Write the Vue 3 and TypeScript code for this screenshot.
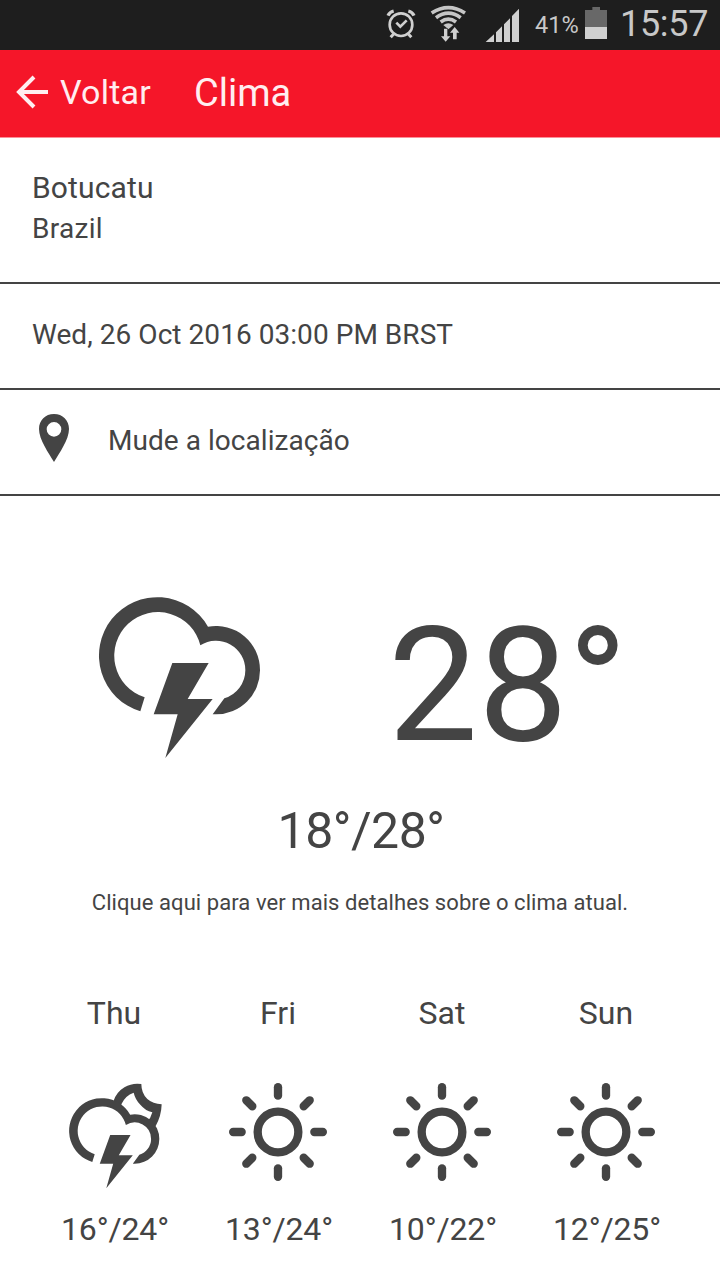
<script setup lang="ts">
interface Day { name: string; range: string; icon: 'storm' | 'sun' }

const days: Day[] = [
  { name: 'Thu', range: '16°/24°', icon: 'storm' },
  { name: 'Fri', range: '13°/24°', icon: 'sun' },
  { name: 'Sat', range: '10°/22°', icon: 'sun' },
  { name: 'Sun', range: '12°/25°', icon: 'sun' },
]
const rays = [0, 45, 90, 135, 180, 225, 270, 315]
const cloud =
  'M181 394A175 175 0 1 1 384 140A132 132 0 0 1 540 271A132 132 0 0 1 408 403H398L433 355A88 88 0 0 0 496 271A88 88 0 0 0 361 196A131 131 0 1 0 194 352Z'
const bolt = 'M277 249H386L323 357H398L256 534L293 403H221Z'
</script>

<template>
  <div class="screen">
    <div class="status">
      <svg class="indicators" viewBox="0 0 450 150">
        <g fill="none" stroke="#d0d0d0">
          <circle cx="93" cy="74" r="34" stroke-width="8" />
          <path d="M79 68l12 12 19-19" stroke-width="8" />
          <path d="M54 47Q59 36 71 33M115 33Q127 36 132 47" stroke-width="10" />
          <path d="M71 102l-9 10M115 102l9 10" stroke-width="9" />
        </g>
        <g fill="none" stroke="#c6c6c6" stroke-width="11">
          <path d="M185 39Q235 7 285 39" />
          <path d="M198 53Q235 26 272 53" />
          <path d="M212 66Q235 49 258 66" />
        </g>
        <path d="M220 75Q235 65 250 75L235 88Z" fill="#c6c6c6" />
        <path
          d="M222 86h10v23h9l-14 16-14-16h9zM249 118V98h-9l14-17 14 17h-8v20z"
          fill="#d0d0d0"
          stroke="#1e1e1e"
          stroke-width="2"
          paint-order="stroke"
        />
        <path d="M347 126L372 103V126ZM378 126V97L396 79V126ZM402 126V73L420 55V126ZM426 126V48L447 26V126Z" fill="#d0d0d0" />
      </svg>
      <span class="percent">41%</span>
      <svg class="battery" viewBox="0 0 66 96">
        <path d="M0 9H22V0H45V9H66V60H0Z" fill="#686868" />
        <path d="M0 60H66V96H0Z" fill="#d0d0d0" />
      </svg>
      <span class="clock">15:57</span>
    </div>

    <header class="bar">
      <svg class="arrow" viewBox="0 0 34 34">
        <path d="M18 2L3 17L18 32M3 17H32" fill="none" stroke="#ffeef0" stroke-width="4" />
      </svg>
      <span class="back">Voltar</span>
      <h1 class="title">Clima</h1>
    </header>

    <section class="row place">
      <div class="city">Botucatu</div>
      <div class="country">Brazil</div>
    </section>
    <section class="row date"><span>Wed, 26 Oct 2016 03:00 PM BRST</span></section>
    <section class="row change">
      <svg class="pin" viewBox="0 0 90 144">
        <path
          fill-rule="evenodd"
          d="M45 0C19 0 0 19 0 45C0 77 29 117 45 144C61 117 90 77 90 45C90 19 71 0 45 0ZM45 24A22 22 0 1 1 45 68A22 22 0 1 1 45 24Z"
        />
      </svg>
      <span>Mude a localização</span>
    </section>

    <section class="current">
      <svg class="now" viewBox="0 0 600 570">
        <path :d="cloud" />
        <path :d="bolt" />
      </svg>
      <span class="temp">28°</span>
    </section>
    <div class="range">18°/28°</div>
    <div class="hint">Clique aqui para ver mais detalhes sobre o clima atual.</div>

    <section class="forecast">
      <div v-for="day in days" :key="day.name" class="day">
        <div class="name">{{ day.name }}</div>
        <svg v-if="day.icon === 'storm'" class="icon" viewBox="28 300 330 330">
          <path d="M192 362A75 75 0 0 1 275 312Q275 340 293 357Q310 372 336 373Q335 408 318 438L260 420Z" />
          <path class="paper" d="M215 373Q227 346 252 338Q257 359 272 374Q287 392 308 397L301 415L270 440L225 420Z" />
          <g transform="translate(26.5 325.5) scale(.56)">
            <circle class="paper" cx="232" cy="226" r="150" />
            <circle class="paper" cx="408" cy="271" r="110" />
            <path :d="cloud" />
            <path :d="bolt" />
          </g>
        </svg>
        <svg v-else class="icon" viewBox="520 300 330 330">
          <g fill="none" stroke="#444" stroke-width="25" stroke-linecap="round">
            <circle cx="685" cy="456" r="61" />
            <path v-for="a in rays" :key="a" d="M685 347V321.500" :transform="`rotate(${a} 685 456)`" />
          </g>
        </svg>
        <div class="degrees">{{ day.range }}</div>
      </div>
    </section>
  </div>
</template>

<style>
body { margin: 0; background: #fff; }
</style>

<style scoped>
.screen {
  width: 720px;
  height: 1280px;
  overflow: hidden;
  background: #fff;
  color: #444;
  font-family: Roboto, "Liberation Sans", sans-serif;
  white-space: nowrap;
}
svg { display: block; flex: none; fill: #444; }
.paper { fill: #fff; }
.status {
  display: flex;
  align-items: flex-start;
  height: 50px;
  padding-left: 370px;
  background: #1e1e1e;
  color: #c8c8c8;
}
.indicators { width: 150px; height: 50px; }
.percent { width: 50px; padding-left: 15px; font-size: 23.500px; line-height: 50px; }
.battery { width: 22px; height: 32px; margin-top: 7px; }
.clock { margin-left: 13px; font-size: 36px; letter-spacing: -.3px; line-height: 49px; }
.bar {
  display: flex;
  align-items: center;
  height: 88px;
  padding-left: 16px;
  box-sizing: border-box;
  background: #f51629;
  color: #ffeef0;
  border-bottom: 1px solid #fb8f98;
}
.arrow { width: 34px; height: 34px; margin-top: -3px; }
.back { width: 134px; margin-left: 10px; padding-bottom: 3px; font-size: 34px; letter-spacing: .2px; line-height: 84px; }
.title { margin: 0; padding-bottom: 1px; font-size: 38px; font-weight: 400; line-height: 84px; }
.row {
  box-sizing: border-box;
  height: 106px;
  padding: 0 32px;
  border-bottom: 2px solid #444;
  font-size: 28px;
  letter-spacing: .05px;
}
.place { height: 146px; padding-top: 30px; }
.city { font-size: 30px; letter-spacing: .15px; line-height: 40px; }
.country { letter-spacing: .3px; line-height: 42px; }
.date { line-height: 102px; }
.change { display: flex; line-height: 102px; }
.pin { width: 30px; height: 48px; margin: 24px 39px 0 7px; }
.current { display: flex; height: 275px; }
.now { width: 200px; height: 190px; margin: 84px 0 0 80px; }
.temp { margin: 96px 0 0 108px; font-size: 160px; line-height: 188px; }
.range { height: 120px; padding-left: 2px; font-size: 50px; letter-spacing: -.5px; line-height: 120px; text-align: center; }
.hint { height: 30px; margin-top: -3px; font-size: 22px; letter-spacing: .07px; line-height: 30px; text-align: center; }
.forecast { display: flex; padding: 0 32px; margin-top: 75px; }
.day { display: flex; flex-direction: column; align-items: center; width: 164px; }
.name, .degrees { font-size: 32px; line-height: 40px; }
.degrees { padding-left: 2px; letter-spacing: -.15px; }
.icon { width: 110px; height: 110px; margin: 47px 0 19px; }
</style>
